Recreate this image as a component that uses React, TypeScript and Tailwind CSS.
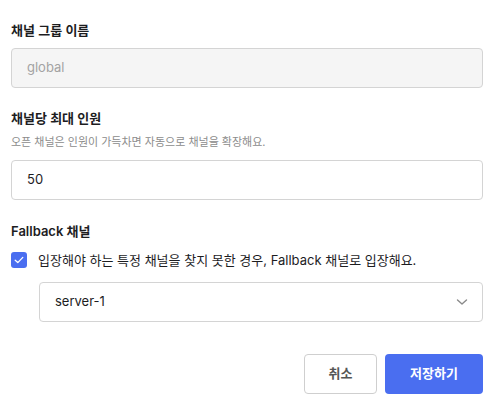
import React from "react";

export default function App() {
  const font = { fontFamily: 'Inter, "Noto Sans CJK KR", sans-serif' };
  return (
    <div
      className="w-[499px] h-[408px] bg-white pl-[11px] pr-[16px] pt-[20px] text-[#1d1d1f]"
      style={font}
    >
      <div className="flex flex-col">
        <div className="text-[13px] leading-[20px] font-semibold">채널 그룹 이름</div>
        <div className="mt-[8px] h-[40px] rounded-[4px] border border-[#d4d4d4] bg-[#f5f5f5] flex items-center px-[15px] text-[13px] text-[#a3a3a3]">
          global
        </div>

        <div className="mt-[20px] text-[13px] leading-[20px] font-semibold">채널당 최대 인원</div>
        <div className="mt-[6px] text-[11px] leading-[16px] text-[#8c8c8c]">
          오픈 채널은 인원이 가득차면 자동으로 채널을 확장해요.
        </div>
        <div className="mt-[10px] h-[40px] rounded-[4px] border border-[#d4d4d4] bg-white flex items-center px-[15px] text-[13px] text-[#1d1d1f]">
          50
        </div>

        <div className="mt-[21px] text-[13px] leading-[20px] font-semibold">Fallback 채널</div>
        <div className="mt-[9px] flex items-center h-[20px]">
          <div className="w-[16px] h-[16px] rounded-[3px] bg-[#4a6ef0] flex items-center justify-center">
            <svg width="10" height="8" viewBox="0 0 10 8" fill="none">
              <path d="M1.2 4.2 L3.8 6.6 L8.8 1.4" stroke="white" strokeWidth="1.3" strokeLinecap="round" strokeLinejoin="round" />
            </svg>
          </div>
          <span className="ml-[11px] text-[13px] leading-[20px] text-[#1d1d1f]">
            입장해야 하는 특정 채널을 찾지 못한 경우, Fallback 채널로 입장해요.
          </span>
        </div>
        <div className="mt-[12px] ml-[28px] h-[40px] rounded-[4px] border border-[#d4d4d4] bg-white flex items-center justify-between pl-[15px] pr-[14px] text-[13px] text-[#1d1d1f]">
          <span>server-1</span>
          <svg width="12" height="8" viewBox="0 0 12 8" fill="none">
            <path d="M1.5 2 L6 6 L10.5 2" stroke="#8a8a8a" strokeWidth="1.4" strokeLinecap="round" strokeLinejoin="round" />
          </svg>
        </div>

        <div className="mt-[32px] flex justify-end gap-[8px]">
          <button className="h-[40px] w-[73px] rounded-[4px] border border-[#cfcfcf] bg-white text-[13px] font-semibold text-[#555]">
            취소
          </button>
          <button className="h-[40px] w-[98px] rounded-[4px] bg-[#4a6ef0] text-[13px] font-semibold text-white">
            저장하기
          </button>
        </div>
      </div>
    </div>
  );
}
